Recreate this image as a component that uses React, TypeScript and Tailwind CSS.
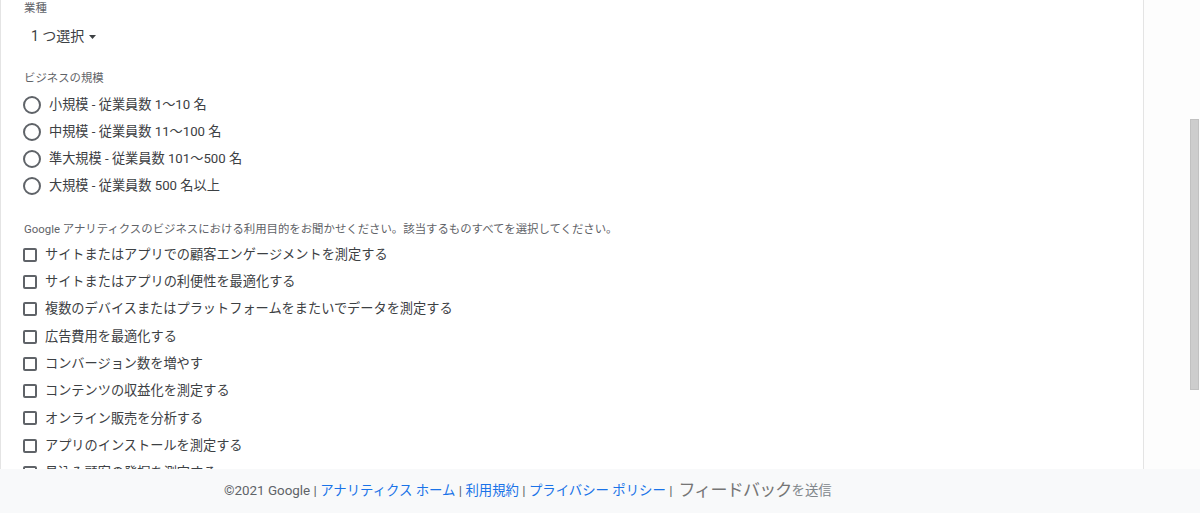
import React from "react";

const sizes = [
  "小規模 - 従業員数 1〜10 名",
  "中規模 - 従業員数 11〜100 名",
  "準大規模 - 従業員数 101〜500 名",
  "大規模 - 従業員数 500 名以上",
];

const purposes = [
  "サイトまたはアプリでの顧客エンゲージメントを測定する",
  "サイトまたはアプリの利便性を最適化する",
  "複数のデバイスまたはプラットフォームをまたいでデータを測定する",
  "広告費用を最適化する",
  "コンバージョン数を増やす",
  "コンテンツの収益化を測定する",
  "オンライン販売を分析する",
  "アプリのインストールを測定する",
  "見込み顧客の発掘を測定する",
];

const App = () => {
  return (
    <div className="h-[515px] w-[1200px] flex flex-col bg-white overflow-hidden font-['Roboto','Noto_Sans_CJK_JP',sans-serif]">
      <div className="flex h-[469px]">
        <main className="w-[1144px] shrink-0 border-x border-[#e4e4e4] overflow-hidden pl-[23px]">
          <div className="text-[11.4px] leading-4 text-[#5f6368]">業種</div>
          <div className="mt-[8px] h-[24px] flex items-center pl-[7px] text-[14px] text-[#3c4043]">
            <span>1 つ選択</span>
            <svg className="ml-[5px] mt-[1px]" width="7" height="4" viewBox="0 0 7 4">
              <path d="M0 0h7L3.5 4z" fill="#3c4043" />
            </svg>
          </div>

          <div className="mt-[22px] text-[11.4px] leading-4 text-[#5f6368]">ビジネスの規模</div>
          <div className="mt-[5px] flex flex-col">
            {sizes.map((s) => (
              <label key={s} className="h-[27px] flex items-center gap-[8px] -ml-[1px] text-[13.2px] text-[#3c4043]">
                <span className="w-[18px] h-[18px] rounded-full border-2 border-[#5f6368]" />
                <span>{s}</span>
              </label>
            ))}
          </div>

          <div className="mt-[22px] text-[11.4px] leading-4 text-[#5f6368]">
            Google アナリティクスのビジネスにおける利用目的をお聞かせください。該当するものすべてを選択してください。
          </div>
          <div className="mt-[4px] flex flex-col">
            {purposes.map((p) => (
              <label key={p} className="h-[27.3px] flex items-center gap-[8px] -ml-[1px] text-[13.2px] text-[#3c4043]">
                <span className="w-[14px] h-[14px] rounded-[2px] border-2 border-[#5f6368]" />
                <span>{p}</span>
              </label>
            ))}
          </div>
        </main>
        <div className="flex-1 bg-[#fdfdfd] flex justify-end pt-[119px] pr-[1px]">
          <div className="w-[9px] h-[271px] bg-[#cdcdcd] border border-[#c1c1c1]" />
        </div>
      </div>
      <footer className="h-[44px] bg-[#f8f9fa] flex items-center pl-[224px] text-[13.4px] text-[#5f6368] whitespace-pre">
        <span>©2021 Google | </span>
        <span className="text-[#1a73e8]">アナリティクス ホーム</span>
        <span> | </span>
        <span className="text-[#1a73e8]">利用規約</span>
        <span> | </span>
        <span className="text-[#1a73e8]">プライバシー ポリシー</span>
        <span> |</span>
        <span className="ml-[6px] text-[17px] tracking-[-0.8px] text-[#757575]">フィードバック</span>
        <span className="text-[13.4px] text-[#80868b]">を送信</span>
      </footer>
    </div>
  );
};

export default App;
